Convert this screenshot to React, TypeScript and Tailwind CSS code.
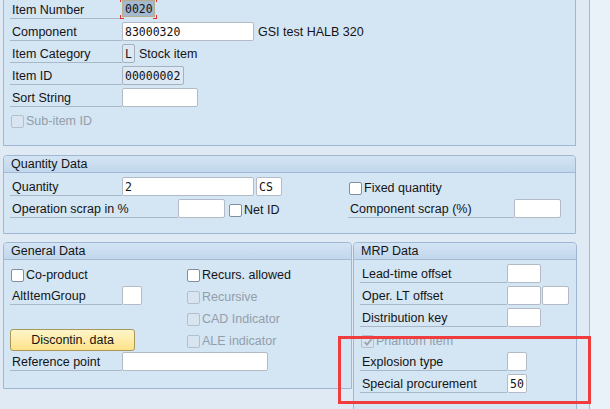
import React from 'react';

// SAP GUI style BOM item detail screen

const font = { fontFamily: '"Liberation Sans", Arial, sans-serif' };

function Label({ text, w }: { text: string; w: string }) {
  return (
    <div className={`${w} h-[19px] shrink-0 border-b border-[#a9b8c8] pl-[2px] leading-[21px] whitespace-nowrap`}>
      {text}
    </div>
  );
}

function Field({ value, w, display }: { value?: string; w: string; display?: boolean }) {
  return (
    <div
      className={`${w} h-[19px] shrink-0 border ${
        display ? 'bg-[#dce8f4] border-[#a6b1bd]' : 'bg-white border-[#b3bcc6]'
      } rounded-[2px] px-[2px] text-[11.5px] leading-[19px] text-[#111] font-['DejaVu_Sans_Mono',monospace] overflow-hidden`}
    >
      {value}
    </div>
  );
}

function Check({ label, disabled, checked }: { label: string; disabled?: boolean; checked?: boolean }) {
  return (
    <div className="flex h-[19px] items-center pt-[4px] whitespace-nowrap">
      <div
        className={`ml-[1px] flex h-[13px] w-[13px] items-center justify-center rounded-[2px] border ${
          disabled ? 'border-[#b3bfcb] bg-[#d8e4ef]' : 'border-[#7f8fa1] bg-white'
        }`}
      >
        {checked && (
          <svg width="10" height="10" viewBox="0 0 10 10">
            <path d="M1.5 5.2 L4 7.6 L8.6 2.2" fill="none" stroke="#9aa6b2" strokeWidth="1.8" />
          </svg>
        )}
      </div>
      <span className={`ml-[2px] ${disabled ? 'text-[#939ea9]' : ''}`}>{label}</span>
    </div>
  );
}

function Row({ children }: { children: React.ReactNode }) {
  return <div className="flex h-[22px] items-start">{children}</div>;
}

function Header({ title }: { title: string }) {
  return (
    <div className="h-[17px] border-b border-[#a2bad3] bg-gradient-to-b from-[#d3e4f4] to-[#c2d7ec] pl-[7px] leading-[17px] rounded-t-[3px]">
      {title}
    </div>
  );
}

export default function App() {
  return (
    <div className="relative flex h-[409px] w-[610px] overflow-hidden bg-[#dfeaf5] text-[12.5px] text-[#141414]" style={font}>
      <div className="w-[590px] shrink-0 border-r border-[#a1b9d2] pl-[3px]">
        {/* Item header */}
        <div className="w-[573px] border-x border-b border-[#9fb7d1] bg-[#d4e5f4] pl-[6px] pb-[13px]">
          <Row>
            <Label text="Item Number" w="w-[112px]" />
            <div className="relative">
              <div className="h-[17px] w-[33px] border border-[#b5ad8e] bg-[#a4b8d0] px-[2px] text-[11.5px] leading-[16px] font-['DejaVu_Sans_Mono',monospace]">
                0020
              </div>
              <span className="absolute -left-[2px] -top-[2px] h-[4px] w-[1px] bg-[#e03030]" />
              <span className="absolute -left-[2px] top-[15px] h-[4px] w-[1px] bg-[#e03030]" />
              <span className="absolute -left-[2px] top-[18px] h-[1px] w-[4px] bg-[#e03030]" />
              <span className="absolute -right-[2px] -top-[2px] h-[4px] w-[1px] bg-[#e03030]" />
              <span className="absolute -right-[2px] top-[15px] h-[4px] w-[1px] bg-[#e03030]" />
              <span className="absolute -right-[2px] top-[18px] h-[1px] w-[4px] bg-[#e03030]" />
            </div>
          </Row>
          <Row>
            <Label text="Component" w="w-[112px]" />
            <Field value="83000320" w="w-[132px]" />
            <span className="ml-[4px] leading-[21px]">GSI test HALB 320</span>
          </Row>
          <Row>
            <Label text="Item Category" w="w-[112px]" />
            <Field value="L" w="w-[13px]" display />
            <span className="ml-[4px] leading-[21px]">Stock item</span>
          </Row>
          <Row>
            <Label text="Item ID" w="w-[112px]" />
            <Field value="00000002" w="w-[62px]" display />
          </Row>
          <Row>
            <Label text="Sort String" w="w-[112px]" />
            <Field w="w-[76px]" />
          </Row>
          <Row>
            <Check label="Sub-item ID" disabled />
          </Row>
        </div>

        {/* Quantity Data */}
        <div className="mt-[9px] w-[573px] border border-[#9fb7d1] bg-[#d4e5f4] rounded-t-[4px]">
          <Header title="Quantity Data" />
          <div className="pl-[6px] pt-[4px] pb-[12px]">
            <Row>
              <div className="flex w-[338px] shrink-0">
                <Label text="Quantity" w="w-[112px]" />
                <Field value="2" w="w-[132px]" />
                <div className="ml-[2px]">
                  <Field value="CS" w="w-[26px]" />
                </div>
              </div>
              <Check label="Fixed quantity" />
            </Row>
            <Row>
              <div className="flex w-[338px] shrink-0">
                <Label text="Operation scrap in %" w="w-[168px]" />
                <Field w="w-[47px]" />
                <div className="ml-[3px]">
                  <Check label="Net ID" />
                </div>
              </div>
              <Label text="Component scrap (%)" w="w-[166px]" />
              <Field w="w-[47px]" />
            </Row>
          </div>
        </div>

        {/* General + MRP */}
        <div className="mt-[8px] flex gap-[1px]">
          <div className="h-[147px] w-[349px] shrink-0 border border-[#9fb7d1] bg-[#d4e5f4] rounded-t-[4px]">
            <Header title="General Data" />
            <div className="pl-[6px] pt-[4px]">
              <Row>
                <div className="w-[176px] shrink-0">
                  <Check label="Co-product" />
                </div>
                <Check label="Recurs. allowed" />
              </Row>
              <Row>
                <div className="flex w-[176px] shrink-0">
                  <Label text="AltItemGroup" w="w-[112px]" />
                  <Field w="w-[20px]" />
                </div>
                <Check label="Recursive" disabled />
              </Row>
              <Row>
                <div className="w-[176px] shrink-0" />
                <Check label="CAD Indicator" disabled />
              </Row>
              <Row>
                <div className="w-[176px] shrink-0">
                  <button className="-mt-[1px] h-[22px] w-[125px] rounded-[3px] border border-[#a8995a] bg-gradient-to-b from-[#fff5c8] to-[#fde288] leading-[21px] text-[#141414]">
                    Discontin. data
                  </button>
                </div>
                <Check label="ALE indicator" disabled />
              </Row>
              <Row>
                <Label text="Reference point" w="w-[112px]" />
                <Field w="w-[146px]" />
              </Row>
            </div>
          </div>

          <div className="h-[200px] w-[224px] shrink-0 border border-[#9fb7d1] bg-[#d4e5f4] rounded-t-[4px]">
            <Header title="MRP Data" />
            <div className="pl-[6px] pt-[4px]">
              <Row>
                <Label text="Lead-time offset" w="w-[147px]" />
                <Field w="w-[34px]" />
              </Row>
              <Row>
                <Label text="Oper. LT offset" w="w-[147px]" />
                <Field w="w-[34px]" />
                <div className="ml-[1px]">
                  <Field w="w-[27px]" />
                </div>
              </Row>
              <Row>
                <Label text="Distribution key" w="w-[147px]" />
                <Field w="w-[34px]" />
              </Row>
              <Row>
                <Check label="Phantom item" disabled checked />
              </Row>
              <Row>
                <Label text="Explosion type" w="w-[147px]" />
                <Field w="w-[20px]" />
              </Row>
              <Row>
                <Label text="Special procurement" w="w-[147px]" />
                <Field value="50" w="w-[20px]" />
              </Row>
            </div>
          </div>
        </div>
      </div>
      <div className="flex-1 bg-[#e9f1f9]" />

      {/* red highlight annotation */}
      <div className="pointer-events-none absolute left-[338px] top-[336px] h-[68px] w-[253px] border-[3px] border-[#f03c3c]" />
    </div>
  );
}
